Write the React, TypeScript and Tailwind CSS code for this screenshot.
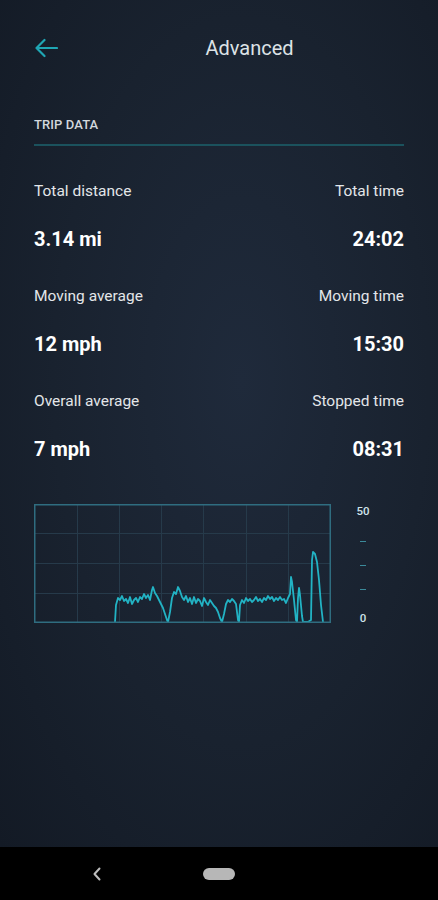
import React from "react";

const rows = [
  { left: "Total distance", leftValue: "3.14 mi", right: "Total time", rightValue: "24:02" },
  { left: "Moving average", leftValue: "12 mph", right: "Moving time", rightValue: "15:30" },
  { left: "Overall average", leftValue: "7 mph", right: "Stopped time", rightValue: "08:31" },
];

// speed trace, in page coordinates (converted to the chart box below)
const trace: [number, number][] = [
  [115, 622], [116, 605], [118, 598], [120, 600], [122, 596], [124, 601], [126, 599], [128, 603],
  [130, 597], [132, 604], [134, 600], [136, 598], [138, 602], [140, 597], [142, 599], [144, 594],
  [146, 598], [148, 595], [150, 600], [152, 590], [153, 587], [155, 593], [157, 596], [159, 600],
  [161, 604], [163, 608], [165, 614], [167, 620], [168, 622], [170, 612], [172, 598], [174, 592],
  [176, 594], [178, 587], [180, 591], [182, 597], [184, 600], [186, 596], [188, 602], [190, 598],
  [192, 604], [194, 597], [196, 603], [198, 599], [200, 601], [202, 606], [204, 598], [206, 602],
  [208, 605], [210, 600], [212, 603], [214, 606], [216, 608], [218, 612], [220, 618], [222, 622],
  [224, 614], [226, 604], [228, 600], [230, 602], [232, 599], [234, 601], [236, 604], [238, 620],
  [239, 622], [240, 605], [242, 600], [244, 603], [246, 598], [248, 601], [250, 599], [252, 602],
  [254, 600], [256, 597], [258, 601], [260, 599], [262, 602], [264, 598], [266, 600], [268, 596],
  [270, 599], [272, 597], [274, 601], [276, 598], [278, 600], [280, 597], [282, 600], [284, 599],
  [286, 603], [288, 598], [290, 594], [291, 577], [292, 582], [294, 600], [296, 620], [297, 622],
  [298, 598], [299, 588], [300, 595], [302, 616], [303, 622], [308, 622], [311, 620], [312, 560],
  [313, 552], [315, 554], [317, 562], [319, 580], [321, 605], [323, 622],
];

function SpeedChart() {
  const points = trace.map(([x, y]) => `${x - 34},${y - 504}`).join(" ");
  return (
    <div className="flex items-stretch">
      <svg width={297} height={119} viewBox="0 0 297 119" className="block">
        {/* grid */}
        {[43, 85, 127, 169, 212, 254].map((x) => (
          <line key={x} x1={x + 0.5} y1={0} x2={x + 0.5} y2={118} stroke="#263a4a" strokeWidth={1} />
        ))}
        {[29, 59, 89].map((y) => (
          <line key={y} x1={0} y1={y + 0.5} x2={296} y2={y + 0.5} stroke="#263a4a" strokeWidth={1} />
        ))}
        <polyline points={points} fill="none" stroke="#22b3c4" strokeWidth={1.8} strokeLinejoin="round" />
        <rect x={0.75} y={0.75} width={295.5} height={117.5} fill="none" stroke="#2f6d80" strokeWidth={1.5} />
      </svg>
      <div className="ml-[24px] flex w-[16px] flex-col items-center justify-between text-[11.5px] font-medium leading-none text-[#cfe3ea]">
        <span className="mt-[2px]">50</span>
        <span className="h-px w-[6px] bg-[#3b8a9a]" />
        <span className="h-px w-[6px] bg-[#3b8a9a]" />
        <span className="h-px w-[6px] bg-[#3b8a9a]" />
        <span className="mb-[-1px]">0</span>
      </div>
    </div>
  );
}

export default function App() {
  return (
    <div
      className="flex h-[900px] w-[438px] flex-col overflow-hidden"
      style={{ fontFamily: "Roboto, 'Liberation Sans', sans-serif" }}
    >
      <main className="flex flex-1 flex-col bg-[radial-gradient(ellipse_at_55%_45%,#1f2a3b_0%,#19222f_55%,#131a25_100%)] px-[34px]">
        {/* header */}
        <header className="mt-[20px] flex h-[56px] items-center">
          <svg width={24} height={20} viewBox="0 0 24 20" className="shrink-0 text-[#1fa6b4]">
            <path d="M23 10H2.5M10.5 2L2.5 10l8 8" fill="none" stroke="currentColor" strokeWidth={2.2} strokeLinecap="round" strokeLinejoin="round" />
          </svg>
          <h1 className="flex-1 pl-[37px] text-center text-[20px] font-normal text-[#dde2e6]">Advanced</h1>
        </header>

        <div className="mt-[41px] text-[13px] font-medium leading-4 tracking-[0.1px] text-[#d3d8dd]">TRIP DATA</div>
        <div className="mt-[11px] h-[2px] bg-[#1b525d]" />

        <div className="mt-[35px] flex flex-col gap-[35px]">
          {rows.map((r) => (
            <div key={r.left} className="flex justify-between">
              <div className="flex flex-col gap-[26px]">
                <span className="text-[15.5px] leading-5 text-[#e3e6e9]">{r.left}</span>
                <span className="text-[20px] font-bold leading-6 text-white">{r.leftValue}</span>
              </div>
              <div className="flex flex-col items-end gap-[26px]">
                <span className="text-[15.5px] leading-5 text-[#e3e6e9]">{r.right}</span>
                <span className="text-[20px] font-bold leading-6 text-white">{r.rightValue}</span>
              </div>
            </div>
          ))}
        </div>

        <div className="mt-[43px]">
          <SpeedChart />
        </div>
      </main>

      {/* system navigation bar */}
      <nav className="relative flex h-[53px] items-center justify-center bg-black">
        <svg width={10} height={14} viewBox="0 0 10 14" className="absolute left-[92px] top-[20px]">
          <path d="M7.5 1.5L2.5 7l5 5.5" fill="none" stroke="#bdbdbd" strokeWidth={2} strokeLinecap="round" strokeLinejoin="round" />
        </svg>
        <div className="h-[12px] w-[32px] rounded-full bg-[#b7b7b7]" />
      </nav>
    </div>
  );
}
